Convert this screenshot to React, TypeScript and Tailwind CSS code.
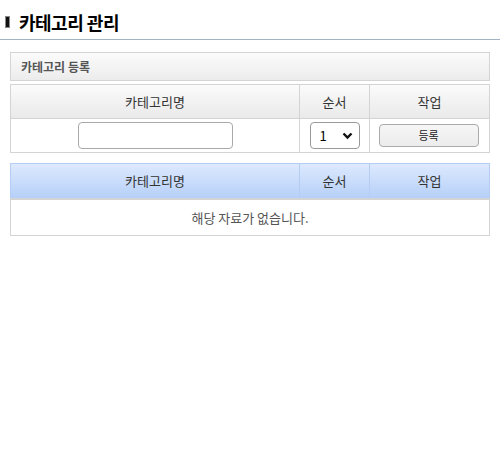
import React from "react";

const font = { fontFamily: '"Noto Sans CJK KR", "Noto Sans", sans-serif' };

export default function App() {
  return (
    <div className="w-[500px] h-[450px] bg-white text-[#333]" style={font}>
      <div className="flex items-center h-[39px] pl-[5px] pt-[5px]">
        <span className="shrink-0 w-[5px] h-[12px] bg-[#111] border border-[#888] mr-[9px]" />
        <h1 className="text-[18px] font-bold text-black leading-none tracking-[-0.5px]">카테고리 관리</h1>
      </div>
      <div className="h-px bg-[#a3b3c5]" />
      <div className="px-[10px] pt-[12px]">
        <div className="h-[29px] border border-[#d4d4d4] bg-gradient-to-b from-[#fbfbfb] to-[#ececec] flex items-center pl-[10px] text-[12px] font-semibold text-[#555]">
          카테고리 등록
        </div>
        <table className="w-full mt-[3px] border-collapse text-[13px] text-[#333]">
          <tbody>
            <tr className="h-[34px] bg-gradient-to-b from-[#fbfbfb] to-[#e9e9e9]">
              <td className="border border-[#d4d4d4] text-center w-[289px]">카테고리명</td>
              <td className="border border-[#d4d4d4] text-center w-[70px]">순서</td>
              <td className="border border-[#d4d4d4] text-center">작업</td>
            </tr>
            <tr className="h-[34px]">
              <td className="border border-[#d4d4d4] text-center">
                <div className="flex justify-center">
                  <input className="w-[155px] h-[27px] border border-[#a9a9a9] rounded-[4px] bg-white" />
                </div>
              </td>
              <td className="border border-[#d4d4d4] text-center">
                <div className="flex justify-center">
                  <div className="w-[50px] h-[27px] border border-[#999] rounded-[4px] flex items-center justify-between pl-[9px] pr-[6px] text-[13px] text-black">
                    <span>1</span>
                    <svg width="11" height="8" viewBox="0 0 11 8">
                      <path d="M1.5 1.5 L5.5 5.5 L9.5 1.5" stroke="#111" strokeWidth="2.4" fill="none" />
                    </svg>
                  </div>
                </div>
              </td>
              <td className="border border-[#d4d4d4] text-center">
                <div className="flex justify-center pr-[2px]">
                  <button className="w-[100px] h-[23px] border border-[#aaa] rounded-[4px] bg-gradient-to-b from-[#f6f6f6] to-[#ececec] text-[11px] text-[#222]">
                    등록
                  </button>
                </div>
              </td>
            </tr>
          </tbody>
        </table>
        <table className="w-full mt-[10px] border-collapse text-[13px] text-[#333]">
          <tbody>
            <tr className="h-[35px] bg-gradient-to-b from-[#dde9fd] to-[#b5cff8]">
              <td className="border border-[#b5cdf3] text-center w-[289px]">카테고리명</td>
              <td className="border border-[#b5cdf3] text-center w-[70px]">순서</td>
              <td className="border border-[#b5cdf3] text-center">작업</td>
            </tr>
            <tr className="h-[37px]">
              <td colSpan={3} className="border border-[#d4d4d4] border-t-2 text-center text-[#555]">
                해당 자료가 없습니다.
              </td>
            </tr>
          </tbody>
        </table>
      </div>
    </div>
  );
}
